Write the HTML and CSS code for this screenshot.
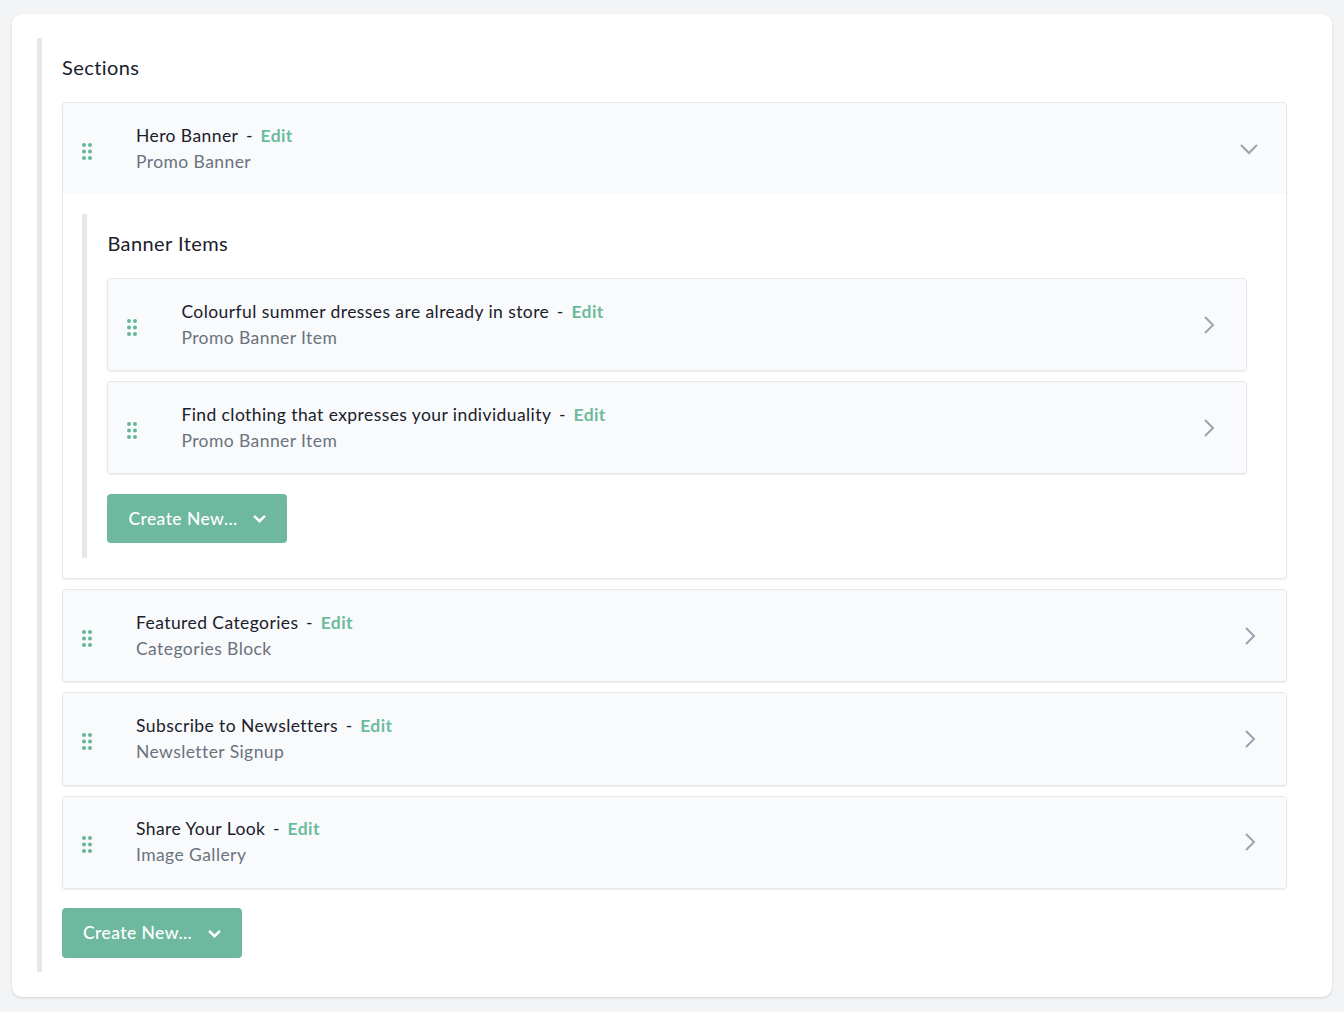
FILE: index.html
```html
<!doctype html>
<html>
<head>
    <meta charset="utf-8" />
    <title>Sections</title>
    <link rel="stylesheet" href="styles.css">
</head>

<body>
    <div class="card">
        <div class="group">
            <h2 class="group-title">Sections</h2>

            <div class="item open">
                <div class="item-head">
                    <svg class="grip" viewBox="0 0 10 17"><circle cx="2" cy="2" r="2"/><circle cx="8" cy="2" r="2"/><circle cx="2" cy="8.5" r="2"/><circle cx="8" cy="8.5" r="2"/><circle cx="2" cy="15" r="2"/><circle cx="8" cy="15" r="2"/></svg>
                    <div class="item-text">
                        <div class="item-name">Hero Banner<span class="dash">-</span><a class="edit">Edit</a></div>
                        <div class="item-type">Promo Banner</div>
                    </div>
                    <svg class="chev down" viewBox="0 0 18 11"><path d="M1 1l8 8 8-8"/></svg>
                </div>
                <div class="item-body">
                    <div class="group">
                        <h2 class="group-title">Banner Items</h2>

                        <div class="item">
                            <div class="item-head">
                                <svg class="grip" viewBox="0 0 10 17"><circle cx="2" cy="2" r="2"/><circle cx="8" cy="2" r="2"/><circle cx="2" cy="8.5" r="2"/><circle cx="8" cy="8.5" r="2"/><circle cx="2" cy="15" r="2"/><circle cx="8" cy="15" r="2"/></svg>
                                <div class="item-text">
                                    <div class="item-name">Colourful summer dresses are already in store<span class="dash">-</span><a class="edit">Edit</a></div>
                                    <div class="item-type">Promo Banner Item</div>
                                </div>
                                <svg class="chev right" viewBox="0 0 11 18"><path d="M1 1l8 8-8 8"/></svg>
                            </div>
                        </div>

                        <div class="item">
                            <div class="item-head">
                                <svg class="grip" viewBox="0 0 10 17"><circle cx="2" cy="2" r="2"/><circle cx="8" cy="2" r="2"/><circle cx="2" cy="8.5" r="2"/><circle cx="8" cy="8.5" r="2"/><circle cx="2" cy="15" r="2"/><circle cx="8" cy="15" r="2"/></svg>
                                <div class="item-text">
                                    <div class="item-name">Find clothing that expresses your individuality<span class="dash">-</span><a class="edit">Edit</a></div>
                                    <div class="item-type">Promo Banner Item</div>
                                </div>
                                <svg class="chev right" viewBox="0 0 11 18"><path d="M1 1l8 8-8 8"/></svg>
                            </div>
                        </div>

                        <button class="create">Create New...<svg viewBox="0 0 12 8"><path d="M1 1.5l5 5 5-5"/></svg></button>
                    </div>
                </div>
            </div>

            <div class="item">
                <div class="item-head">
                    <svg class="grip" viewBox="0 0 10 17"><circle cx="2" cy="2" r="2"/><circle cx="8" cy="2" r="2"/><circle cx="2" cy="8.5" r="2"/><circle cx="8" cy="8.5" r="2"/><circle cx="2" cy="15" r="2"/><circle cx="8" cy="15" r="2"/></svg>
                    <div class="item-text">
                        <div class="item-name">Featured Categories<span class="dash">-</span><a class="edit">Edit</a></div>
                        <div class="item-type">Categories Block</div>
                    </div>
                    <svg class="chev right" viewBox="0 0 11 18"><path d="M1 1l8 8-8 8"/></svg>
                </div>
            </div>

            <div class="item">
                <div class="item-head">
                    <svg class="grip" viewBox="0 0 10 17"><circle cx="2" cy="2" r="2"/><circle cx="8" cy="2" r="2"/><circle cx="2" cy="8.5" r="2"/><circle cx="8" cy="8.5" r="2"/><circle cx="2" cy="15" r="2"/><circle cx="8" cy="15" r="2"/></svg>
                    <div class="item-text">
                        <div class="item-name">Subscribe to Newsletters<span class="dash">-</span><a class="edit">Edit</a></div>
                        <div class="item-type">Newsletter Signup</div>
                    </div>
                    <svg class="chev right" viewBox="0 0 11 18"><path d="M1 1l8 8-8 8"/></svg>
                </div>
            </div>

            <div class="item">
                <div class="item-head">
                    <svg class="grip" viewBox="0 0 10 17"><circle cx="2" cy="2" r="2"/><circle cx="8" cy="2" r="2"/><circle cx="2" cy="8.5" r="2"/><circle cx="8" cy="8.5" r="2"/><circle cx="2" cy="15" r="2"/><circle cx="8" cy="15" r="2"/></svg>
                    <div class="item-text">
                        <div class="item-name">Share Your Look<span class="dash">-</span><a class="edit">Edit</a></div>
                        <div class="item-type">Image Gallery</div>
                    </div>
                    <svg class="chev right" viewBox="0 0 11 18"><path d="M1 1l8 8-8 8"/></svg>
                </div>
            </div>

            <button class="create">Create New...<svg viewBox="0 0 12 8"><path d="M1 1.5l5 5 5-5"/></svg></button>
        </div>
    </div>
</body>

</html>
```
FILE: styles.css
```css
:root {
    --green: #6eb89f;
    --link: #62b798;
    --ink: #1a202c;
    --muted: #6b7280;
    --line: #e5e7eb;
}
html, body {
    background-color: #f3f4f6;
}
body {
    margin: 0;
    padding: 13.5px 12px 15px;
    font-family: 'Lato', 'Open Sans', sans-serif;
    font-size: 17.5px;
    letter-spacing: 0.42px;
    line-height: 25.5px;
    color: var(--ink);
}

.card {
    background-color: #fff;
    border-radius: 10px;
    box-shadow: 0 1px 3px rgba(0, 0, 0, 0.14);
    padding: 24.5px 45px 24.6px 25px;
}

.group {
    border-left: 5px solid var(--line);
    padding: 15.5px 0 14.5px 20px;
}
.group-title {
    margin: 0 0 21.7px;
    font-size: 20px;
    font-weight: 400;
    line-height: 27px;
}

.item {
    margin-bottom: 10px;
    background-color: #fff;
    border: 1px solid var(--line);
    border-radius: 4px;
    box-shadow: 0 1px 2px rgba(0, 0, 0, 0.07);
}
.item-head {
    display: flex;
    align-items: center;
    padding: 19.65px 30px 20.05px 19px;
    background-color: #f9fafb;
    border-radius: 4px;
}
.item.open > .item-head {
    border-radius: 4px 4px 0 0;
    padding: 20px 28px 19.5px 19px;
}
.item-body .item-head {
    padding: 19.65px 31px 19.85px 19px;
}
.item-text {
    flex-grow: 1;
    margin-left: 44px;
}
.item-name {
    height: 25.5px;
}
.item-type {
    height: 25.5px;
    margin-top: 0.5px;
    color: var(--muted);
}
.dash {
    margin: 0 7.6px;
}
.edit {
    color: #6cbb9f;
    font-weight: 700;
}

.grip {
    flex-shrink: 0;
    width: 10px;
    height: 17px;
    margin-top: 5px;
    fill: var(--link);
}
.chev {
    flex-shrink: 0;
    fill: none;
    stroke: #9ca3af;
    stroke-width: 2;
}
    .chev.down {
        width: 18px;
        height: 11px;
        margin-top: 1px;
    }
    .chev.right {
        width: 11px;
        height: 18px;
    }

.item-body {
    padding: 20px 39.5px 20.3px 19.4px;
}

.create {
    display: flex;
    align-items: center;
    height: 49.6px;
    margin-top: 20px;
    padding: 0 21px;
    background-color: var(--green);
    border: 0;
    border-radius: 4px;
    color: #fff;
    font: inherit;
    font-weight: 500;
    letter-spacing: inherit;
}
.group > .item:nth-last-child(2) + .create {
    margin-top: 19.5px;
}
.create svg {
    width: 13px;
    height: 9px;
    margin-left: 15.5px;
    fill: none;
    stroke: #fff;
    stroke-width: 2.3;
}
```
